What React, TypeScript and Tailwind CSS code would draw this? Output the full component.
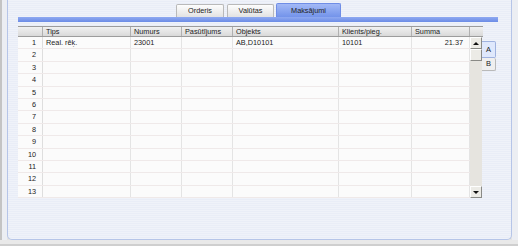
import React from "react";

const cols = [
  { w: "w-[25px]", label: "" },
  { w: "w-[88px]", label: "Tips" },
  { w: "w-[51px]", label: "Numurs" },
  { w: "w-[51px]", label: "Pasūtījums" },
  { w: "w-[106px]", label: "Objekts" },
  { w: "w-[73px]", label: "Klients/pieg." },
  { w: "w-[58px]", label: "Summa" },
];

const firstRow = ["Real. rēķ.", "23001", "", "AB,D10101", "10101", "21.37"];

function Tab({ label, active, width }: { label: string; active?: boolean; width: string }) {
  return (
    <div
      className={
        active
          ? `${width} h-[14px] rounded-t-[2px] border border-b-0 border-[#6f8de6] bg-gradient-to-b from-[#a3b9f6] to-[#7393ea] flex items-center justify-center`
          : `${width} h-[13px] rounded-t-[2px] border border-b-0 border-[#b9b9b9] bg-gradient-to-b from-[#fdfdfd] to-[#e2e2e2] flex items-center justify-center`
      }
    >
      <span className="leading-none text-[7.3px] text-[#222]">{label}</span>
    </div>
  );
}

function Bevel({ up }: { up?: boolean }) {
  return (
    <div className="h-[12px] w-[12px] bg-[#ecebe6] border-t border-l border-[#fefefe] border-r border-b border-r-[#8a8a86] border-b-[#8a8a86] flex items-center justify-center">
      <div
        className={
          up
            ? "w-0 h-0 border-l-[3px] border-r-[3px] border-b-[3px] border-l-transparent border-r-transparent border-b-[#111]"
            : "w-0 h-0 border-l-[3px] border-r-[3px] border-t-[3px] border-l-transparent border-r-transparent border-t-[#111]"
        }
      />
    </div>
  );
}

export default function App() {
  const rows = Array.from({ length: 13 }, (_, i) => i + 1);
  return (
    <div className="w-[518px] h-[246px] flex flex-col bg-[#e4e4e4] font-['Liberation_Sans',Arial,sans-serif] text-[#1c1c1c] overflow-hidden">
      <div className="h-[240px] flex">
        <div className="w-[7px] border-l-2 border-[#c4c4c4] bg-[#eceef3]" />
        <div className="w-[505px] border-x border-b border-[#b6c5e8] rounded-b-[5px] bg-[repeating-linear-gradient(180deg,#eff2f9_0px,#eff2f9_1px,#e9edf7_1px,#e9edf7_2px)] pl-[10px] pt-[3px]">
          {/* tabs */}
          <div className="h-[14px] flex items-end pl-[158px]">
            <Tab label="Orderis" width="w-[48px]" />
            <div className="w-[3px]" />
            <Tab label="Valūtas" width="w-[47px]" />
            <div className="w-[2px]" />
            <Tab label="Maksājumi" width="w-[65px]" active />
          </div>
          <div className="h-[5px] w-[480px] bg-gradient-to-b from-[#8fa9f1] to-[#6c8ce6]" />

          <div className="mt-[4px] flex">
            <div className="w-[465px]">
              {/* header */}
              <div className="h-[11px] flex border-t border-b border-[#9c9c9c] bg-gradient-to-b from-[#f1f1f1] to-[#d9d9d9]">
                {cols.map((c, i) => (
                  <div
                    key={i}
                    className={`${c.w} h-full border-r border-[#b0b0b0] flex items-center pl-[3px] text-[7.3px] leading-none`}
                  >
                    {c.label}
                  </div>
                ))}
                <div className="w-[13px] h-full" />
              </div>
              {/* body */}
              <div className="flex">
                <div className="w-[452px] bg-[#fbfbfb]">
                  {rows.map((r) => (
                    <div key={r} className="h-[12.4px] flex border-b border-[#efe9e9]">
                      <div className="w-[25px] h-full border-r border-[#dedede] flex items-center justify-end pr-[6px] text-[7.3px] leading-none">
                        {r}
                      </div>
                      {cols.slice(1).map((c, i) => (
                        <div
                          key={i}
                          className={`${c.w} h-full border-r border-[#e4e4e4] flex items-center text-[7.3px] leading-none ${
                            i === 5 ? "justify-end pr-[6px]" : "pl-[3px]"
                          }`}
                        >
                          {r === 1 ? firstRow[i] : ""}
                        </div>
                      ))}
                    </div>
                  ))}
                </div>
                <div className="w-[12px] bg-[#e6e4df] flex flex-col">
                  <Bevel up />
                  <div className="h-[12px] w-[12px] bg-[#ecebe6] border-t border-l border-[#fefefe] border-r border-b border-r-[#8a8a86] border-b-[#8a8a86]" />
                  <div className="flex-1" />
                  <Bevel />
                </div>
              </div>
            </div>
            {/* A / B side tabs */}
            <div className="-ml-px pt-[15px] flex flex-col">
              <div className="w-[14px] h-[17px] rounded-r-[2px] border border-l-0 border-[#9fb2df] bg-[#dfe8fc] flex items-center justify-center text-[7.5px] leading-none">
                A
              </div>
              <div className="w-[14px] h-[13px] rounded-r-[2px] border border-l-0 border-t-0 border-[#b9b9b9] bg-[#efefef] flex items-center justify-center text-[7.5px] leading-none">
                B
              </div>
            </div>
          </div>
        </div>
        <div className="w-[6px] bg-[#eceef3]" />
      </div>
      <div className="h-[6px] border-b-2 border-[#cfcfcf] bg-[#e9e9e9]" />
    </div>
  );
}
